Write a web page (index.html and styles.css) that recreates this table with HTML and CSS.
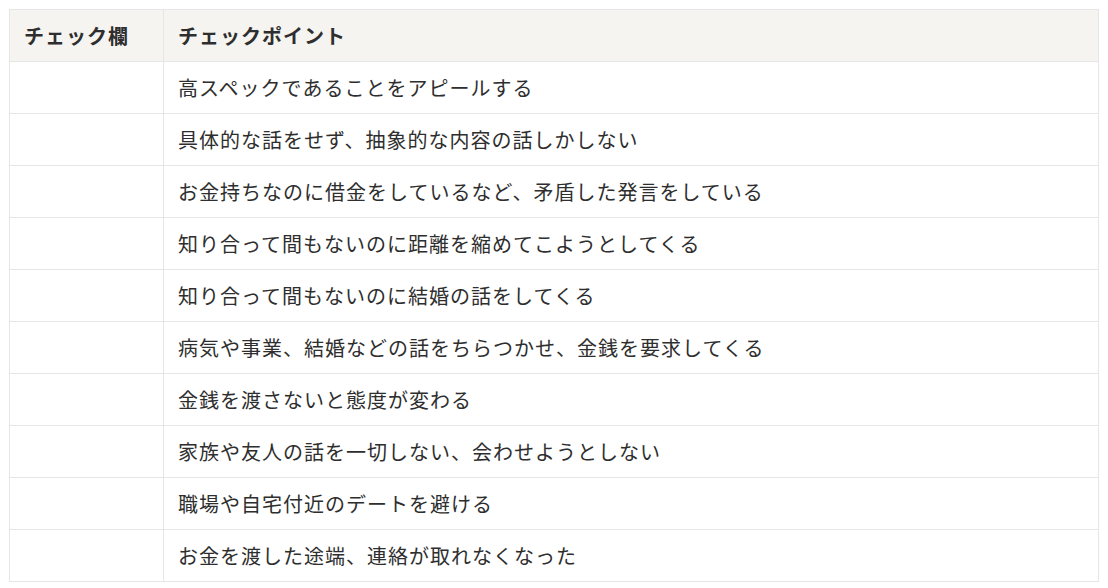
FILE: index.html
```html
<!DOCTYPE html>
<html lang="ja">
<head>
<meta charset="utf-8">
<link rel="stylesheet" href="styles.css">
</head>
<body>
<table class="check-table">
  <thead>
    <tr><th class="col-check">チェック欄</th><th>チェックポイント</th></tr>
  </thead>
  <tbody>
    <tr><td></td><td>高スペックであることをアピールする</td></tr>
    <tr><td></td><td>具体的な話をせず、抽象的な内容の話しかしない</td></tr>
    <tr><td></td><td>お金持ちなのに借金をしているなど、矛盾した発言をしている</td></tr>
    <tr><td></td><td>知り合って間もないのに距離を縮めてこようとしてくる</td></tr>
    <tr><td></td><td>知り合って間もないのに結婚の話をしてくる</td></tr>
    <tr><td></td><td>病気や事業、結婚などの話をちらつかせ、金銭を要求してくる</td></tr>
    <tr><td></td><td>金銭を渡さないと態度が変わる</td></tr>
    <tr><td></td><td>家族や友人の話を一切しない、会わせようとしない</td></tr>
    <tr><td></td><td>職場や自宅付近のデートを避ける</td></tr>
    <tr><td></td><td>お金を渡した途端、連絡が取れなくなった</td></tr>
  </tbody>
</table>
</body>
</html>
```
FILE: styles.css
```css
html, body {
  margin: 0;
  padding: 0;
  background: #ffffff;
}
body {
  padding: 9px 10px 0 9px;
  font-family: "Noto Sans CJK JP", "Noto Sans", sans-serif;
  color: #2e2e2e;
}
.check-table {
  border-collapse: collapse;
  width: 1090px;
  table-layout: fixed;
}
.check-table th,
.check-table td {
  border: 1px solid #e6e6e6;
  height: 52px;
  padding: 0 14px 0 14px;
  box-sizing: border-box;
  text-align: left;
  vertical-align: middle;
  font-size: 20px;
  letter-spacing: 1px;
  line-height: 1;
  white-space: nowrap;
}
.check-table th {
  background: #f5f4f0;
  font-weight: 700;
}
.check-table td {
  font-weight: 400;
}
.check-table .col-check {
  width: 154px;
}
```
